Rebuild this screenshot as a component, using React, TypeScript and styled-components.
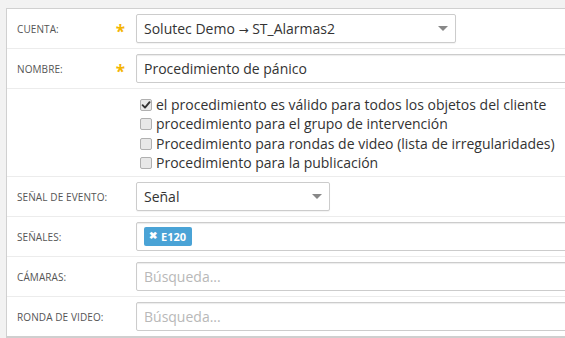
import React from 'react';
import styled, { createGlobalStyle } from 'styled-components';

const GlobalStyle = createGlobalStyle`
  html, body {
    margin: 0;
    padding: 0;
    background: #f2f2f2;
    overflow: hidden;
    font-family: 'Open Sans', 'Liberation Sans', sans-serif;
  }
`;

const options = [
  { label: 'el procedimiento es válido para todos los objetos del cliente', checked: true },
  { label: 'procedimiento para el grupo de intervención', checked: false },
  { label: 'Procedimiento para rondas de video (lista de irregularidades)', checked: false },
  { label: 'Procedimiento para la publicación', checked: false },
];

const App: React.FC = () => {
  return (
    <>
      <GlobalStyle />
      <Page>
        <Panel>
          <Row>
            <Label>
              CUENTA:
              <Required>*</Required>
            </Label>
            <Field>
              <Select width={320}>
                <Value>
                  Solutec Demo <Arrow>→</Arrow> ST_Alarmas2
                </Value>
                <Caret />
              </Select>
            </Field>
          </Row>

          <Row>
            <Label>
              NOMBRE:
              <Required>*</Required>
            </Label>
            <Field>
              <Input width={520}>
                <Value>Procedimiento de pánico</Value>
              </Input>
            </Field>
          </Row>

          <Row>
            <Label />
            <CheckList>
              {options.map((o) => (
                <CheckItem key={o.label}>
                  <CheckBox>
                    {o.checked && (
                      <svg width="10" height="10" viewBox="0 0 10 10">
                        <path
                          d="M1.6 5.2 L4 7.6 L8.6 2.2"
                          fill="none"
                          stroke="#333"
                          strokeWidth="1.9"
                          strokeLinecap="round"
                          strokeLinejoin="round"
                        />
                      </svg>
                    )}
                  </CheckBox>
                  {o.label}
                </CheckItem>
              ))}
            </CheckList>
          </Row>

          <Row>
            <Label>SEÑAL DE EVENTO:</Label>
            <Field>
              <Select width={194}>
                <Value>Señal</Value>
                <Caret />
              </Select>
            </Field>
          </Row>

          <Row>
            <Label>SEÑALES:</Label>
            <Field>
              <Input width={520}>
                <Tag>
                  <TagRemove>✖</TagRemove>E120
                </Tag>
              </Input>
            </Field>
          </Row>

          <Row>
            <Label>CÁMARAS:</Label>
            <Field>
              <Input width={520}>
                <Placeholder>Búsqueda...</Placeholder>
              </Input>
            </Field>
          </Row>

          <Row last>
            <Label>RONDA DE VIDEO:</Label>
            <Field>
              <Input width={520}>
                <Placeholder>Búsqueda...</Placeholder>
              </Input>
            </Field>
          </Row>
        </Panel>
      </Page>
    </>
  );
};

const Page = styled.div`
  padding: 8px 0 0 6px;
  overflow: hidden;
`;

const Panel = styled.div`
  width: 720px;
  background: #fff;
  border-top: 1px solid #d0d0d0;
  border-left: 1px solid #d0d0d0;
  border-bottom: 2px solid #cfcfcf;
`;

const Row = styled.div<{ last?: boolean }>`
  display: grid;
  grid-template-columns: 129px 1fr;
  border-bottom: ${(p) => (p.last ? 'none' : '1px solid #ececec')};
`;

const Label = styled.div`
  display: flex;
  align-items: center;
  justify-content: space-between;
  padding: 0 11px 0 10px;
  font-size: 10px;
  color: #555;
  letter-spacing: 0.1px;
`;

const Required = styled.span`
  color: #f4b400;
  font-size: 17px;
  font-weight: 700;
  line-height: 1;
  padding-top: 6px;
`;

const Field = styled.div`
  padding: 5px 0;
`;

const Box = styled.div<{ width: number }>`
  box-sizing: border-box;
  width: ${(p) => p.width}px;
  height: 29px;
  border: 1px solid #ccc;
  border-radius: 2px;
  box-shadow: inset 0 1px 1px rgba(0, 0, 0, 0.08);
  display: flex;
  align-items: center;
  padding: 0 7px;
  background: #fff;
`;

const Select = styled(Box)`
  justify-content: space-between;
  box-shadow: 0 1px 1px rgba(0, 0, 0, 0.05);
`;

const Input = styled(Box)``;

const Value = styled.span`
  font-size: 14px;
  color: #333;
`;

const Arrow = styled.span`
  font-family: 'DejaVu Sans', sans-serif;
  font-size: 12px;
`;

const Placeholder = styled.span`
  font-size: 14px;
  color: #b8b8b8;
`;

const Caret = styled.span`
  width: 0;
  height: 0;
  border-left: 5px solid transparent;
  border-right: 5px solid transparent;
  border-top: 5px solid #888;
`;

const CheckList = styled.div`
  padding: 6px 0 4px 4px;
`;

const CheckItem = styled.div`
  display: flex;
  align-items: center;
  gap: 4px;
  font-size: 14px;
  line-height: 19.3px;
  color: #333;
`;

const CheckBox = styled.span`
  box-sizing: border-box;
  flex: none;
  width: 12px;
  height: 12px;
  border: 1px solid #b0b0b0;
  border-radius: 2px;
  background: #e8e8e8;
  display: flex;
  align-items: center;
  justify-content: center;
  margin-top: 1px;
`;

const Tag = styled.span`
  display: inline-flex;
  align-items: center;
  gap: 4px;
  height: 19px;
  padding: 0 6px 0 5px;
  background: #4aa3d6;
  color: #fff;
  font-size: 11px;
  font-weight: 700;
  border-radius: 2px;
`;

const TagRemove = styled.span`
  font-size: 10px;
  margin-top: -3px;
`;

export default App;
